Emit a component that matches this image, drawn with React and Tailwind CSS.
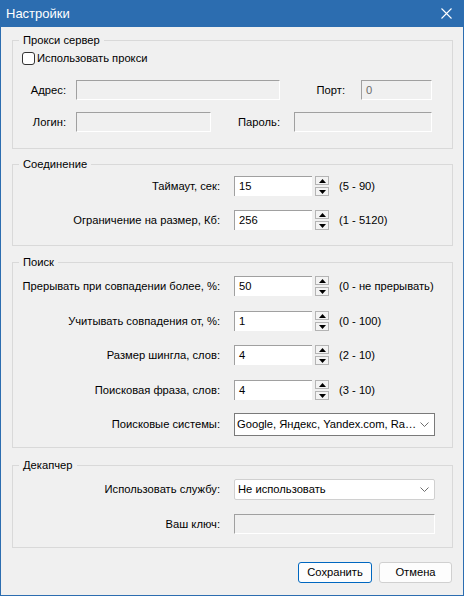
import React from "react";

const font = { fontFamily: '"Liberation Sans", Arial, sans-serif' };

function Spinner() {
    return (
        <div className="ml-[3px] flex h-[20px] w-[14px] flex-col justify-between">
            <div className="flex h-[9px] items-center justify-center border border-[#b4b4b4] bg-[#f3f3f3]">
                <svg width="7" height="4" viewBox="0 0 7 4"><path d="M3.5 0 L7 4 L0 4 Z" fill="#000" /></svg>
            </div>
            <div className="flex h-[9px] items-center justify-center border border-[#b4b4b4] bg-[#f3f3f3]">
                <svg width="7" height="4" viewBox="0 0 7 4"><path d="M0 0 L7 0 L3.5 4 Z" fill="#000" /></svg>
            </div>
        </div>
    );
}

function SpinRow({ label, value, range, className = "" }) {
    return (
        <div className={"flex h-[20px] items-center whitespace-nowrap " + className}>
            <div className="w-[207px] text-right">{label}</div>
            <div className="ml-[14px] flex h-[20px] w-[78px] items-center border-l border-t border-[#a0a0a0] bg-white pl-[4px]">
                {value}
            </div>
            <Spinner />
            <div className="ml-[10px]">{range}</div>
        </div>
    );
}

function Group({ title, className = "", children }) {
    return (
        <fieldset className={"ml-[11px] w-[441px] border border-[#d9d9d9] " + className}>
            <legend className="ml-[6px] px-[4px] leading-[14px]">{title}</legend>
            {children}
        </fieldset>
    );
}

function Chevron() {
    return (
        <svg width="9" height="5" viewBox="0 0 9 5" className="mr-[5px] shrink-0">
            <path d="M0.5 0.5 L4.5 4.5 L8.5 0.5" stroke="#6d6d6d" fill="none" strokeWidth="1" />
        </svg>
    );
}

function Disabled({ w, children }) {
    return (
        <div
            className="flex h-[20px] items-center border-b border-l border-r border-t border-b-white border-l-[#a0a0a0] border-r-white border-t-[#a0a0a0] bg-[#f0f0f0] pl-[4px] text-[#6d6d6d]"
            style={{ width: w }}
        >
            {children}
        </div>
    );
}

export default function App() {
    return (
        <div style={font} className="h-[596px] w-[464px] overflow-hidden border-x border-b border-[#2c6db0] bg-[#f0f0f0] text-[11.2px] text-black">
            {/* title bar */}
            <div className="-mx-px flex h-[27px] items-center justify-between bg-[#2c6db0] pl-[6px] pr-[12px] text-white">
                <span className="text-[13px]">Настройки</span>
                <svg width="11" height="11" viewBox="0 0 11 11">
                    <path d="M0.5 0.5 L10.5 10.5 M10.5 0.5 L0.5 10.5" stroke="#fff" strokeWidth="1.1" />
                </svg>
            </div>

            <Group title="Прокси сервер" className="mt-[6px] pb-[16px]">
                <div className="mt-[4px] flex h-[14px] items-center pl-[9px]">
                    <div className="h-[13px] w-[13px] rounded-[3px] border border-[#333] bg-white" />
                    <span className="ml-[2px]">Использовать прокси</span>
                </div>
                <div className="mt-[15px] flex h-[20px] items-center">
                    <div className="w-[63px] pr-[10px] text-right">Адрес:</div>
                    <Disabled w={204} />
                    <div className="w-[81px] pr-[16px] text-right">Порт:</div>
                    <Disabled w={71}>0</Disabled>
                </div>
                <div className="mt-[12px] flex h-[20px] items-center">
                    <div className="w-[63px] pr-[10px] text-right">Логин:</div>
                    <Disabled w={135} />
                    <div className="w-[83px] pr-[14px] text-right">Пароль:</div>
                    <Disabled w={138} />
                </div>
            </Group>

            <Group title="Соединение" className="mt-[8px] pb-[15px]">
                <SpinRow className="mt-[5px]" label="Таймаут, сек:" value="15" range="(5 - 90)" />
                <SpinRow className="mt-[14px]" label="Ограничение на размер, Кб:" value="256" range="(1 - 5120)" />
            </Group>

            <Group title="Поиск" className="mt-[9px] pb-[11px]">
                <SpinRow className="mt-[7px]" label="Прерывать при совпадении более, %:" value="50" range="(0 - не прерывать)" />
                <SpinRow className="mt-[15px]" label="Учитывать совпадения от, %:" value="1" range="(0 - 100)" />
                <SpinRow className="mt-[14px]" label="Размер шингла, слов:" value="4" range="(2 - 10)" />
                <SpinRow className="mt-[15px]" label="Поисковая фраза, слов:" value="4" range="(3 - 10)" />
                <div className="mt-[13px] flex h-[23px] items-center">
                    <div className="w-[207px] text-right">Поисковые системы:</div>
                    <div className="ml-[14px] flex h-[23px] w-[201px] items-center justify-between border border-[#7a7a7a] bg-white pl-[2px]">
                        <span className="whitespace-nowrap">Google, Яндекс, Yandex.com, Ra…</span>
                        <Chevron />
                    </div>
                </div>
            </Group>

            <Group title="Декапчер" className="mt-[10px] pb-[13px]">
                <div className="mt-[7px] flex h-[21px] items-center">
                    <div className="w-[207px] text-right">Использовать службу:</div>
                    <div className="ml-[14px] flex h-[21px] w-[201px] items-center justify-between rounded-[2px] border border-[#d0d0d0] bg-white pl-[3px]">
                        <span>Не использовать</span>
                        <Chevron />
                    </div>
                </div>
                <div className="mt-[14px] flex h-[20px] items-center">
                    <div className="w-[207px] text-right">Ваш ключ:</div>
                    <div className="ml-[14px]">
                        <Disabled w={201} />
                    </div>
                </div>
            </Group>

            <div className="mt-[14px] flex justify-end gap-[7px] pr-[11px]">
                <button className="h-[21px] w-[74px] rounded-[3px] border border-[#0067c0] bg-[#fdfdfd]">Сохранить</button>
                <button className="h-[21px] w-[73px] rounded-[3px] border border-[#d0d0d0] bg-[#fdfdfd]">Отмена</button>
            </div>
        </div>
    );
}
